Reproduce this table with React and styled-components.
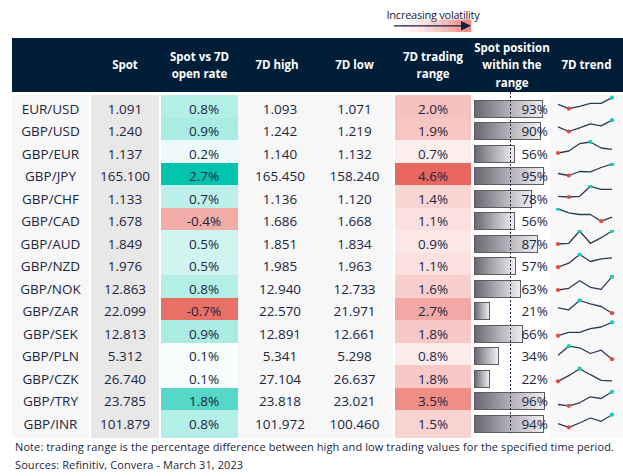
import React from 'react'
import styled, { createGlobalStyle } from 'styled-components'

const GlobalStyle = createGlobalStyle`
  body {
    margin: 0;
    background: #ffffff;
    font-family: "Open Sans", "Noto Sans", sans-serif;
    color: #1b2640;
  }
`

const COLS = '77px 70px 79px 78px 77px 78px 79px 73px'
const ROW_H = 22.5

const rows = [
  ['EUR/USD', '1.091', 0.8, '1.093', '1.071', 2.0, 93, [9.3, 13.7, 11.3, 8.3, 8.3, 2.7]],
  ['GBP/USD', '1.240', 0.9, '1.242', '1.219', 1.9, 90, [8.8, 13.5, 9.8, 5.8, 7.8, 2.2]],
  ['GBP/EUR', '1.137', 0.2, '1.140', '1.132', 0.7, 56, [13, 11, 3.7, 2, 8, 9.3]],
  ['GBP/JPY', '165.100', 2.7, '165.450', '158.240', 4.6, 95, [10.5, 12.5, 8.5, 8.8, 4.5, 1.2]],
  ['GBP/CHF', '1.133', 0.7, '1.136', '1.120', 1.4, 78, [11.3, 12, 11.3, 1.3, 4.3, 4.3]],
  ['GBP/CAD', '1.678', -0.4, '1.686', '1.668', 1.1, 56, [0.8, 4.8, 6.5, 6.5, 13.2, 9.2]],
  ['GBP/AUD', '1.849', 0.5, '1.851', '1.834', 0.9, 87, [14, 13.3, 1, 13.3, 7.7, 1]],
  ['GBP/NZD', '1.976', 0.5, '1.985', '1.963', 1.1, 57, [14.2, 10.2, 1.5, 8.5, 5.8, 4.8]],
  ['GBP/NOK', '12.863', 0.8, '12.940', '12.733', 1.6, 63, [15, 13.3, 5.7, 12.3, 14.3, 1.7]],
  ['GBP/ZAR', '22.099', -0.7, '22.570', '21.971', 2.7, 21, [9.8, 11.8, 2.5, 5.8, 8.5, 15.2]],
  ['GBP/SEK', '12.813', 0.9, '12.891', '12.661', 1.8, 66, [15.7, 12.3, 12.3, 8.7, 7, 2.3]],
  ['GBP/PLN', '5.312', 0.1, '5.341', '5.298', 0.8, 34, [12.2, 3.2, 4.8, 10.5, 7.2, 16.2]],
  ['GBP/CZK', '26.740', 0.1, '27.104', '26.637', 1.8, 22, [16.3, 10.7, 3.7, 9.7, 15.3, 15.9]],
  ['GBP/TRY', '23.785', 1.8, '23.818', '23.021', 3.5, 96, [16.5, 17.8, 14.8, 8.8, 10.5, 3.8]],
  ['GBP/INR', '101.879', 0.8, '101.972', '100.460', 1.5, 94, [13.7, 17.3, 13, 8, 11.3, 4.7]],
]

const mix = (from, to, t) => {
  const c = Math.max(0, Math.min(1, t))
  const v = from.map((f, i) => Math.round(f + (to[i] - f) * c))
  return `rgb(${v.join(',')})`
}

const changeColor = (v) =>
  v >= 0
    ? mix([255, 255, 255], [0, 196, 173], v / 2.7)
    : mix([255, 255, 255], [233, 112, 102], -v / 0.7)

const rangeColor = (v) => mix([253, 238, 238], [232, 104, 95], (v - 0.7) / 3.9)

const Page = styled.div`
  width: 623px;
  padding-left: 12px;
  box-sizing: border-box;
`

const LegendRow = styled.div`
  display: grid;
  grid-template-columns: ${COLS};
  height: 38px;
`

const Legend = styled.div`
  grid-column: 6;
  display: flex;
  flex-direction: column;
  align-items: center;
  padding: 9px 0 0 2px;
  white-space: nowrap;
`

const LegendLabel = styled.div`
  font-size: 11px;
  line-height: 12px;
  letter-spacing: -0.25px;
  color: #14213a;
`

const LegendArrow = styled.svg`
  display: block;
  margin-top: -2px;
`

const Header = styled.div`
  display: grid;
  grid-template-columns: ${COLS};
  height: 54px;
  background: #011e38;
  color: #ffffff;
  margin-bottom: 3px;
`

const HeadCell = styled.div`
  display: flex;
  align-items: center;
  justify-content: center;
  text-align: center;
  font-weight: 700;
  font-size: 11.5px;
  line-height: 17.5px;
  padding-left: ${(p) => p.$pad || 0}px;
`

const Body = styled.div`
  position: relative;
`

const Row = styled.div`
  display: grid;
  grid-template-columns: ${COLS};
  height: ${ROW_H}px;
`

const Cell = styled.div`
  box-sizing: border-box;
  display: flex;
  align-items: center;
  justify-content: center;
  font-size: 13.5px;
  padding-left: ${(p) => p.$pad || 0}px;
  background: ${(p) => p.$bg || '#f7f7f7'};
  border-left: ${(p) => (p.$gap ? `${p.$gap}px solid #ffffff` : 'none')};
  background-clip: padding-box;
`

const PositionCell = styled.div`
  box-sizing: border-box;
  border-left: 3px solid #ffffff;
  background: #ffffff;
  display: grid;
  align-items: center;
  padding-right: 2px;
`

const Bar = styled.div`
  grid-area: 1 / 1;
  box-sizing: border-box;
  height: 18px;
  border: 1px solid #5e5b63;
  background: linear-gradient(to right, #6c6770, #b7b5bb 55%, #eeeef2);
`

const PositionText = styled.div`
  grid-area: 1 / 1;
  justify-self: end;
  font-size: 13.5px;
  position: relative;
  z-index: 1;
`

const TrendCell = styled.div`
  background: #f8f8f8;
`

const Midline = styled.div`
  position: absolute;
  top: -3px;
  bottom: 0;
  left: 498px;
  width: 1px;
  background: repeating-linear-gradient(to bottom, #1a2a48 0 2px, transparent 2px 4px);
  z-index: 2;
`

const Footer = styled.div`
  padding: 5px 0 0 3px;
  font-size: 11px;
  line-height: 18px;
  letter-spacing: 0.1px;
  color: #1b2640;
`

const Spark = ({ ys }) => {
  const xs = ys.map((_, i) => 8 + i * 10.8)
  const top = Math.min(...ys)
  const bottom = Math.max(...ys)
  const pts = ys.map((y, i) => `${xs[i]},${y}`).join(' ')
  return (
    <svg width="73" height={ROW_H} viewBox={`0 0 73 ${ROW_H}`}>
      <polyline points={pts} fill="none" stroke="#2a3b55" strokeWidth="1.3" strokeLinejoin="round" />
      {ys.map((y, i) =>
        y === top ? <circle key={i} cx={xs[i]} cy={y} r="2.1" fill="#19c9b4" /> : null
      )}
      {ys.map((y, i) =>
        y === bottom ? <circle key={`b${i}`} cx={xs[i]} cy={y} r="2.1" fill="#e8473d" /> : null
      )}
    </svg>
  )
}

const shades = [0.06, 0.12, 0.2, 0.3, 0.4, 0.52, 0.64, 0.78, 0.92]

const App = () => (
  <Page>
    <GlobalStyle />
    <LegendRow>
      <Legend>
        <LegendLabel>Increasing volatility</LegendLabel>
        <LegendArrow width="78" height="14" viewBox="0 0 78 14">
          {shades.map((o, i) => (
            <rect key={i} x={8 + i * 7.7} y="0.5" width="7.8" height="12.5" fill="#ee7f79" opacity={o} />
          ))}
          <line x1="0" y1="6.8" x2="68" y2="6.8" stroke="#0e2240" strokeWidth="1.3" />
          <polygon points="67,2 77,6.8 67,11.6" fill="#0e2240" />
        </LegendArrow>
      </Legend>
    </LegendRow>

    <Header>
      <HeadCell />
      <HeadCell $pad={2}>Spot</HeadCell>
      <HeadCell $pad={2}>Spot vs 7D<br />open rate</HeadCell>
      <HeadCell>7D high</HeadCell>
      <HeadCell>7D low</HeadCell>
      <HeadCell $pad={2}>7D trading<br />range</HeadCell>
      <HeadCell $pad={3}>Spot position<br />within the<br />range</HeadCell>
      <HeadCell>7D trend</HeadCell>
    </Header>

    <Body>
      {rows.map(([pair, spot, chg, high, low, range, pos, trend]) => (
        <Row key={pair}>
          <Cell>{pair}</Cell>
          <Cell $gap={2} $bg="#e8e8e8">{spot}</Cell>
          <Cell $gap={2} $pad={9} $bg={changeColor(chg)}>{chg.toFixed(1)}%</Cell>
          <Cell $pad={6}>{high}</Cell>
          <Cell>{low}</Cell>
          <Cell $gap={2} $bg={rangeColor(range)}>{range.toFixed(1)}%</Cell>
          <PositionCell>
            <Bar style={{ width: `${pos * 0.74}px` }} />
            <PositionText>{pos}%</PositionText>
          </PositionCell>
          <TrendCell>
            <Spark ys={trend} />
          </TrendCell>
        </Row>
      ))}
      <Midline />
    </Body>

    <Footer>
      <div>Note: trading range is the percentage difference between high and low trading values for the specified time period.</div>
      <div>Sources: Refinitiv, Convera - March 31, 2023</div>
    </Footer>
  </Page>
)

export default App
